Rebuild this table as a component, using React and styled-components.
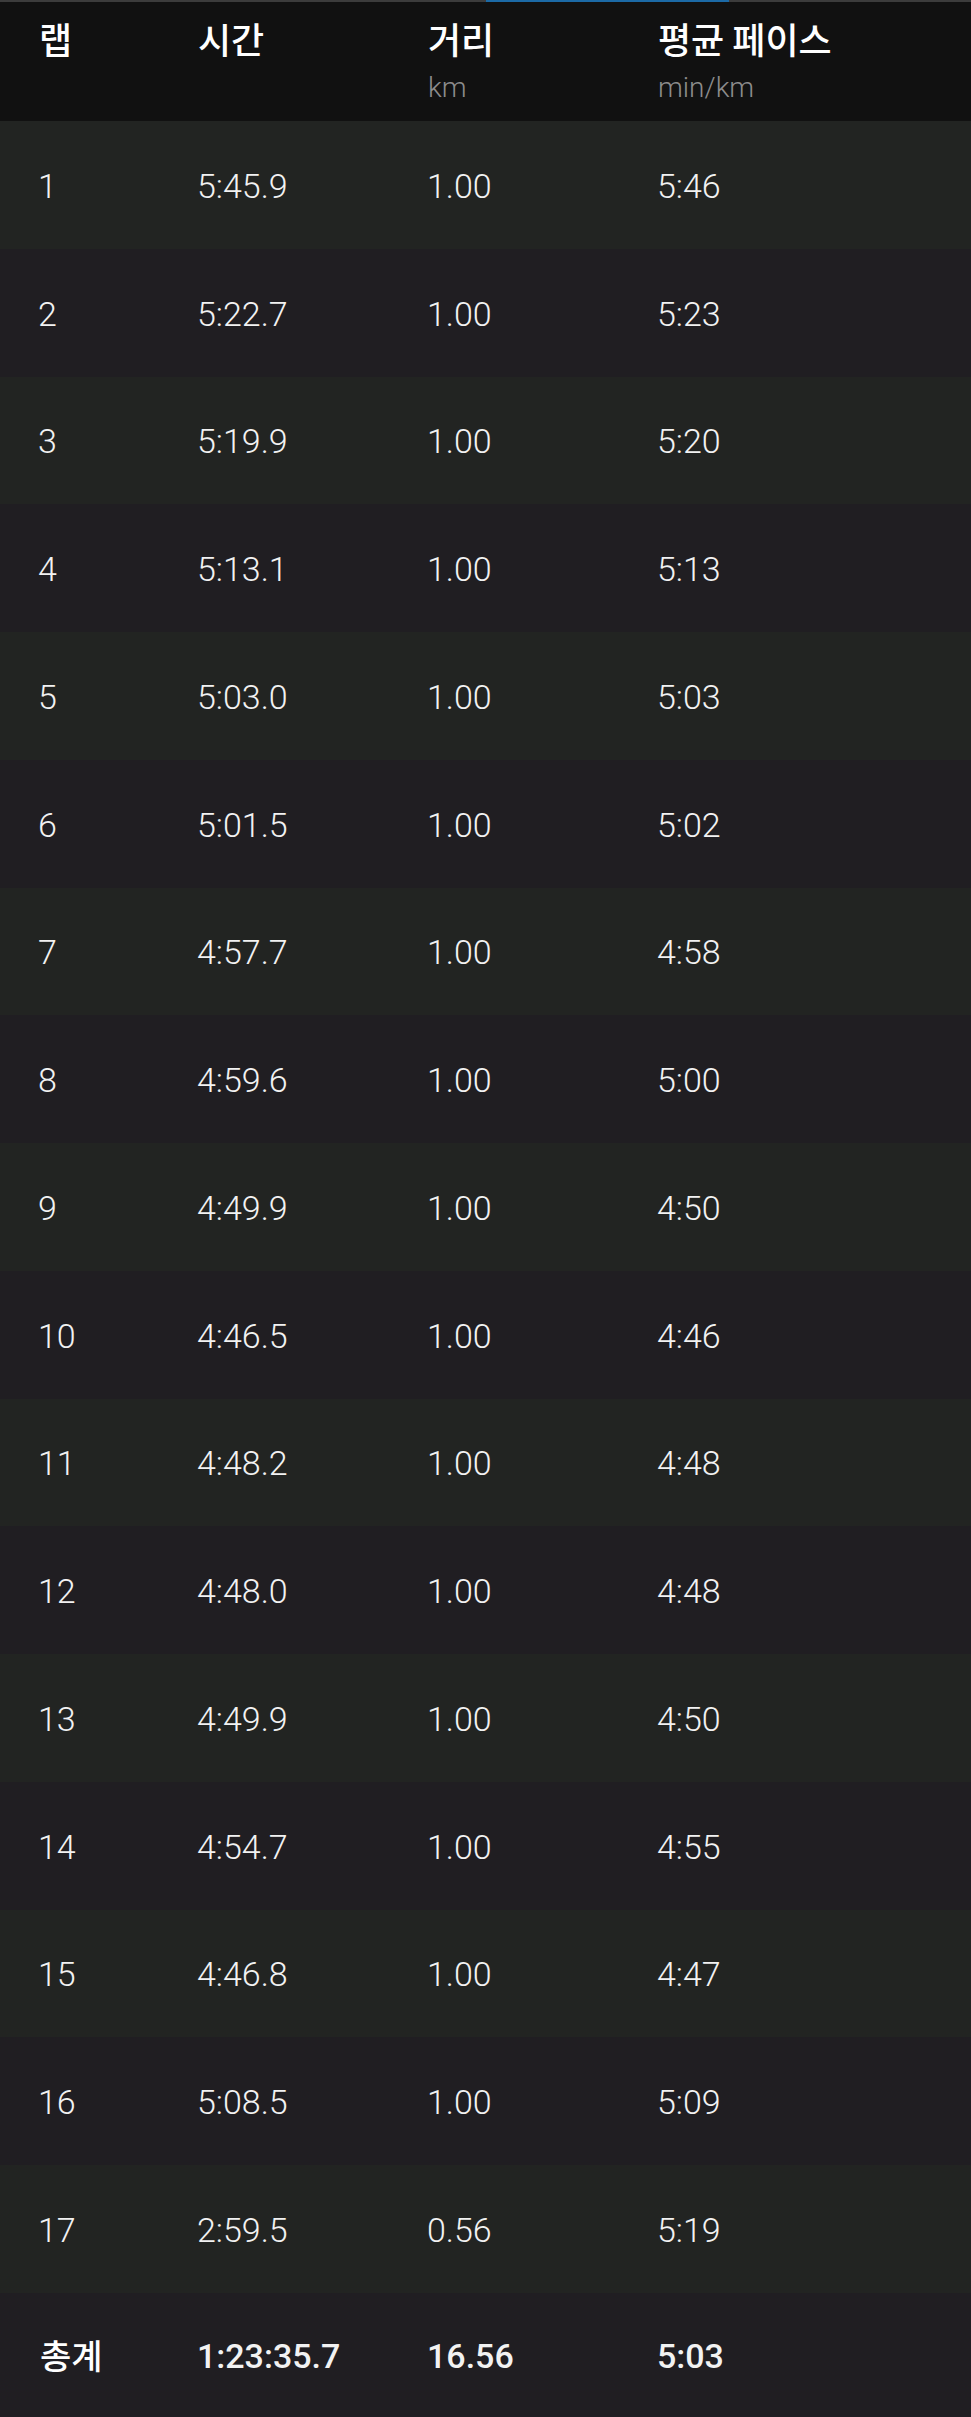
import React from "react";
import styled, { createGlobalStyle } from "styled-components";

const laps = [
  ["1", "5:45.9", "1.00", "5:46"],
  ["2", "5:22.7", "1.00", "5:23"],
  ["3", "5:19.9", "1.00", "5:20"],
  ["4", "5:13.1", "1.00", "5:13"],
  ["5", "5:03.0", "1.00", "5:03"],
  ["6", "5:01.5", "1.00", "5:02"],
  ["7", "4:57.7", "1.00", "4:58"],
  ["8", "4:59.6", "1.00", "5:00"],
  ["9", "4:49.9", "1.00", "4:50"],
  ["10", "4:46.5", "1.00", "4:46"],
  ["11", "4:48.2", "1.00", "4:48"],
  ["12", "4:48.0", "1.00", "4:48"],
  ["13", "4:49.9", "1.00", "4:50"],
  ["14", "4:54.7", "1.00", "4:55"],
  ["15", "4:46.8", "1.00", "4:47"],
  ["16", "5:08.5", "1.00", "5:09"],
  ["17", "2:59.5", "0.56", "5:19"],
];

const GlobalStyle = createGlobalStyle`
  html, body {
    margin: 0;
    padding: 0;
    background: #201e22;
  }
  body {
    font-family: Roboto, "Noto Sans CJK KR", sans-serif;
    color: #fff;
  }
`;

const App = () => {
  return (
    <>
      <GlobalStyle />
      <Wrapper>
        <TopBar>
          <span />
        </TopBar>
        <Header>
          <HeadCell>랩</HeadCell>
          <HeadCell>시간</HeadCell>
          <HeadCell>
            거리
            <Unit>km</Unit>
          </HeadCell>
          <HeadCell>
            평균 페이스
            <Unit>min/km</Unit>
          </HeadCell>
        </Header>
        {laps.map((lap, i) => (
          <Row key={lap[0]} $odd={i % 2 === 0}>
            {lap.map((v, j) => (
              <Cell key={j}>{v}</Cell>
            ))}
          </Row>
        ))}
        <Row $total>
          <TotalLabel>총계</TotalLabel>
          <Cell $bold>1:23:35.7</Cell>
          <Cell $bold>16.56</Cell>
          <Cell $bold>5:03</Cell>
        </Row>
      </Wrapper>
    </>
  );
};

const Wrapper = styled.div`
  width: 971px;
  display: flex;
  flex-direction: column;
`;

const TopBar = styled.div`
  height: 2px;
  background: #3c3c3c;
  position: relative;
  span {
    position: absolute;
    left: 486px;
    width: 243px;
    top: 0;
    height: 2px;
    background: #1c6aa6;
  }
`;

const Header = styled.div`
  display: grid;
  grid-template-columns: 159px 230px 230px 1fr;
  padding: 12px 0 0 39px;
  height: 119px;
  box-sizing: border-box;
  background: #111111;
`;

const HeadCell = styled.div`
  display: flex;
  flex-direction: column;
  font-family: "Noto Sans CJK KR", Roboto, sans-serif;
  font-size: 36px;
  font-weight: 500;
  line-height: 48px;
  color: #ffffff;
`;

const Unit = styled.span`
  font-family: Roboto, sans-serif;
  font-weight: 300;
  font-size: 28px;
  line-height: 30px;
  margin-top: 11px;
  color: #8c8c8c;
`;

const Row = styled.div`
  display: grid;
  grid-template-columns: 159px 230px 230px 1fr;
  align-items: center;
  padding-left: 38px;
  height: ${(p) => (p.$total ? "124px" : "127.75px")};
  background: ${(p) => (p.$odd ? "#222422" : "#201e22")};
`;

const Cell = styled.div`
  font-family: Roboto, sans-serif;
  font-size: 34px;
  font-weight: ${(p) => (p.$bold ? 500 : 300)};
  color: #f2f2f2;
  padding-top: 2px;
`;

const TotalLabel = styled.div`
  font-family: "Noto Sans CJK KR", Roboto, sans-serif;
  font-size: 34px;
  font-weight: 500;
  color: #ffffff;
  padding-left: 2px;
`;

export default App;
